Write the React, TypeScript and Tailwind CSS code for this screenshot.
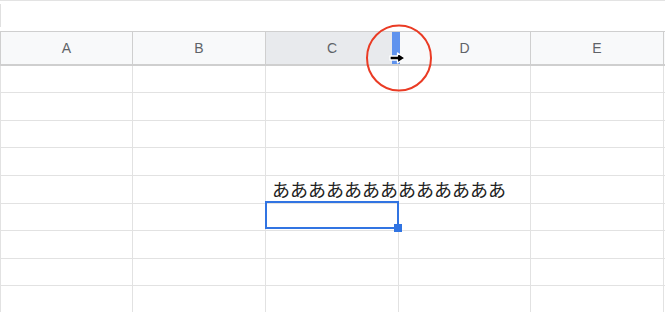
import React from "react";

const cols = [
  { label: "A", w: "w-[132px]" },
  { label: "B", w: "w-[133px]" },
  { label: "C", w: "w-[133px]" },
  { label: "D", w: "w-[132px]" },
  { label: "E", w: "w-[133px]" },
];

const rowHeights = ["h-[27px]", "h-[28px]", "h-[27px]", "h-[28px]", "h-[28px]", "h-[27px]", "h-[28px]", "h-[27px]", "h-[28px]"];

export default function App() {
  return (
    <div
      className="relative w-[665px] h-[312px] overflow-hidden bg-white"
      style={{ fontFamily: '"Liberation Sans", Arial, "Noto Sans CJK JP", sans-serif' }}
    >
      {/* top line */}
      <div className="h-px bg-[#e3e3e3]" />
      {/* formula bar area */}
      <div className="h-[30px] pt-[3px] pb-[4px]">
        <div className="h-full border-l border-[#e0e0e0]" />
      </div>
      {/* header */}
      <div className="flex border-t border-b-2 border-[#cfcfcf] border-l bg-[#f8f9fa] h-[35px]">
        {cols.map((c) => (
          <div
            key={c.label}
            className={`${c.w} shrink-0 relative flex items-center justify-center border-r border-[#cfcfcf] text-[14px] text-[#5f6368] ${
              c.label === "C" ? "bg-[#e8eaed]" : ""
            }`}
          >
            {c.label}
            {c.label === "C" && (
              <div className="absolute right-[-2px] top-0 bottom-0 w-[8px] bg-[#5f93ee] z-20" />
            )}
          </div>
        ))}
      </div>
      {/* body */}
      <div className="flex flex-col border-l border-[#e2e2e2]">
        {rowHeights.map((h, r) => (
          <div key={r} className={`flex ${h} border-b border-[#e2e2e2]`}>
            {cols.map((c, ci) => {
              const isText = r === 4 && ci === 2;
              const isSel = r === 5 && ci === 2;
              return (
                <div
                  key={c.label}
                  className={`${c.w} shrink-0 border-r border-[#e2e2e2] ${
                    isText || isSel ? "relative z-10" : ""
                  }`}
                >
                  {isText && (
                    <div
                      className="pl-[6px] pt-[4px] whitespace-nowrap text-[18px] leading-[18px] text-[#222]"
                      style={{ fontFamily: '"Noto Sans CJK JP", sans-serif' }}
                    >
                      あああああああああああああ
                    </div>
                  )}
                  {isSel && (
                    <div className="absolute inset-x-[-1px] top-[-3px] bottom-[1px] border-2 border-[#3174e2]">
                      <div className="absolute right-[-5px] bottom-[-5px] w-[8px] h-[8px] bg-[#3174e2]" />
                    </div>
                  )}
                </div>
              );
            })}
          </div>
        ))}
      </div>

      {/* cursor */}
      <svg className="absolute left-[388px] top-[51px] z-30" width="20" height="14" viewBox="0 0 20 14">
        <path d="M2 5 H9.5 V2 L17 7 L9.5 12 V9 H2 Z" fill="#000" stroke="#fff" strokeWidth="1.3" strokeLinejoin="round" />
      </svg>

      {/* red circle */}
      <svg className="absolute left-[365px] top-[24px] z-30" width="68" height="68" viewBox="0 0 68 68">
        <ellipse cx="34" cy="34" rx="32" ry="32.5" fill="none" stroke="#ea3b24" strokeWidth="2" />
      </svg>
    </div>
  );
}
